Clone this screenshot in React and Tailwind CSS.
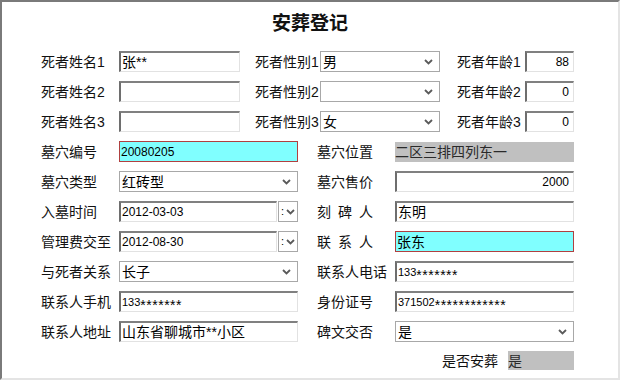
const cjk = "font-['Liberation_Sans','Noto_Sans_CJK_SC',sans-serif]"

const sunken =
  'h-full bg-white border-t-2 border-l-2 border-t-[#808080] border-l-[#6e6e6e] border-r border-b border-r-[#e2e2e2] border-b-[#e2e2e2] flex items-center overflow-hidden whitespace-nowrap'

function Chevron() {
  return (
    <svg width="9" height="6" viewBox="0 0 9 6" className="shrink-0">
      <path d="M1 1l3.5 3.5L8 1" fill="none" stroke="#5a5a5a" strokeWidth="1.8" />
    </svg>
  )
}

function Label({ children, w = 'w-[78px]', className = '' }) {
  return <div className={`${w} shrink-0 text-[14px] leading-none text-[#111] ${className}`}>{children}</div>
}

// a masked number: small digits, wide asterisks
function Masked({ head, stars }) {
  return (
    <span className="text-[11px] leading-none flex items-center">
      {head}
      <span className="text-[14px] tracking-[0.5px] translate-y-[3px]">{'*'.repeat(stars)}</span>
    </span>
  )
}

function Field({ w, value, num, right, className = '' }) {
  return (
    <div className={`${w} ${sunken} ${right ? 'justify-end pr-[4px]' : 'pl-[1px]'} ${className}`}>
      {value != null && (
        <span className={num ? 'text-[12px] leading-none' : 'text-[14px] leading-none'}>{value}</span>
      )}
    </div>
  )
}

function Select({ w, value }) {
  return (
    <div className={`${w} h-full bg-white border border-[#a8a8a8] flex items-center justify-between pl-[2px] pr-[6px]`}>
      <span className="text-[14px] leading-none">{value}</span>
      <Chevron />
    </div>
  )
}

function Cyan({ w, value, num }) {
  return (
    <div className={`${w} h-full bg-[#80ffff] border border-[#b04040] flex items-center pl-[1px]`}>
      <span className={num ? 'text-[12px] leading-none' : 'text-[14px] leading-none'}>{value}</span>
    </div>
  )
}

function DateField({ value }) {
  return (
    <div className="flex h-full">
      <div className={`w-[158px] ${sunken} pl-[1px]`}>
        <span className="text-[12px] leading-none">{value}</span>
      </div>
      <div className="w-[20px] ml-[1px] h-full border border-[#a8a8a8] bg-white flex items-center pl-[2px] gap-[2px]">
        <span className="text-[11px] leading-none">:</span>
        <Chevron />
      </div>
    </div>
  )
}

function Spread({ text }) {
  return (
    <div className="w-[56px] flex justify-between">
      {text.split('').map((c, i) => (
        <span key={i}>{c}</span>
      ))}
    </div>
  )
}

export default function App() {
  const top = [
    ['死者姓名1', '张**', '死者性别1', '男', '死者年龄1', '88'],
    ['死者姓名2', null, '死者性别2', '', '死者年龄2', '0'],
    ['死者姓名3', null, '死者性别3', '女', '死者年龄3', '0'],
  ]

  return (
    <div
      className={`w-[620px] h-[380px] bg-white border-2 border-t-[#7a7a7a] border-l-[#7a7a7a] border-r-[#e4e4e4] border-b-[#e4e4e4] text-black ${cjk}`}
    >
      <h1 className="mt-[10px] h-[24px] text-center text-[19px] leading-[24px] font-bold text-[#111]">安葬登记</h1>

      <div className="mt-[15px] pl-[39px] flex flex-col gap-[9px]">
        {/* ── deceased rows ───────────────────────── */}
        {top.map(([l1, v1, l2, v2, l3, v3]) => (
          <div key={l1} className="flex items-center h-[21px]">
            <Label>{l1}</Label>
            <Field w="w-[121px]" value={v1} />
            <Label w="w-[65px]" className="ml-[15px]">{l2}</Label>
            <Select w="w-[120px]" value={v2} />
            <Label w="w-[68px]" className="ml-[17px]">{l3}</Label>
            <Field w="w-[49px]" value={v3} num right />
          </div>
        ))}

        {/* ── grave + contact rows ────────────────── */}
        <div className="flex items-center h-[21px]">
          <Label>墓穴编号</Label>
          <Cyan w="w-[179px]" value="20080205" num />
          <Label className="ml-[19px]">墓穴位置</Label>
          <div className="w-[179px] h-[20px] bg-[#c0c0c0] flex items-center">
            <span className="text-[14px] leading-none text-[#2a2a2a]">二区三排四列东一</span>
          </div>
        </div>

        <div className="flex items-center h-[21px]">
          <Label>墓穴类型</Label>
          <Select w="w-[179px]" value="红砖型" />
          <Label className="ml-[19px]">墓穴售价</Label>
          <Field w="w-[179px]" value="2000" num right />
        </div>

        <div className="flex items-center h-[21px]">
          <Label>入墓时间</Label>
          <DateField value="2012-03-03" />
          <Label className="ml-[19px]"><Spread text="刻碑人" /></Label>
          <Field w="w-[179px]" value="东明" />
        </div>

        <div className="flex items-center h-[21px]">
          <Label>管理费交至</Label>
          <DateField value="2012-08-30" />
          <Label className="ml-[19px]"><Spread text="联系人" /></Label>
          <Cyan w="w-[179px]" value="张东" />
        </div>

        <div className="flex items-center h-[21px]">
          <Label>与死者关系</Label>
          <Select w="w-[179px]" value="长子" />
          <Label className="ml-[19px]">联系人电话</Label>
          <Field w="w-[179px]" value={<Masked head="133" stars={7} />} />
        </div>

        <div className="flex items-center h-[21px]">
          <Label>联系人手机</Label>
          <Field w="w-[179px]" value={<Masked head="133" stars={7} />} />
          <Label className="ml-[19px]">身份证号</Label>
          <Field w="w-[179px]" value={<Masked head="371502" stars={12} />} />
        </div>

        <div className="flex items-center h-[21px]">
          <Label>联系人地址</Label>
          <Field w="w-[179px]" value="山东省聊城市**小区" />
          <Label className="ml-[19px]">碑文交否</Label>
          <Select w="w-[179px]" value="是" />
        </div>

        <div className="flex items-center h-[19px] ml-[401px]">
          <Label w="w-[66px]">是否安葬</Label>
          <div className="w-[66px] h-full bg-[#c0c0c0] flex items-center">
            <span className="text-[14px] leading-none text-[#2a2a2a]">是</span>
          </div>
        </div>
      </div>
    </div>
  )
}
